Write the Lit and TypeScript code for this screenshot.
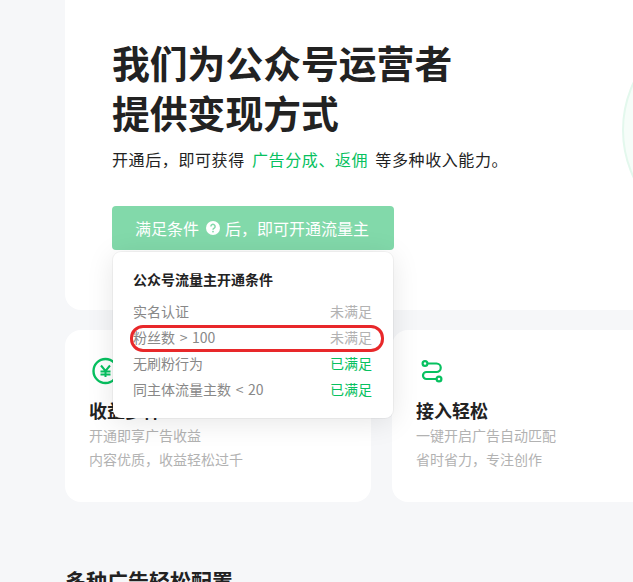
import { LitElement, html, css } from "lit";
import { customElement } from "lit/decorators.js";

const conditions = [
  { label: "实名认证", status: "未满足", ok: false },
  { label: "粉丝数 > 100", status: "未满足", ok: false },
  { label: "无刷粉行为", status: "已满足", ok: true },
  { label: "同主体流量主数 < 20", status: "已满足", ok: true },
];

@customElement("app-root")
export class AppRoot extends LitElement {
  static styles = css`
    :host {
      display: block;
      width: 633px;
      height: 582px;
      overflow: hidden;
      background: #f6f7f9;
      font-family: "Noto Sans CJK SC", "Liberation Sans", sans-serif;
      color: #222;
    }
    .page {
      position: relative;
      height: 582px;
      padding-left: 65px;
      box-sizing: border-box;
      overflow: hidden;
    }
    .hero {
      position: relative;
      box-sizing: border-box;
      width: 640px;
      height: 310px;
      padding: 37px 0 0 47px;
      background: #fff;
      border-radius: 0 0 16px 16px;
      overflow: hidden;
    }
    .hero h1 {
      margin: 0;
      font-size: 37.8px;
      line-height: 50px;
      font-weight: 700;
      color: #222;
    }
    .hero p {
      margin: 10px 0 0;
      font-size: 16px;
      line-height: 24px;
      letter-spacing: 0.6px;
      word-spacing: 3px;
      color: #222;
    }
    .hero p em {
      font-style: normal;
      color: #07c160;
    }
    .circle {
      position: absolute;
      left: 557px;
      top: 18px;
      width: 224px;
      height: 224px;
      border-radius: 50%;
      background: #f6fdf9;
      border: 2px solid #e3f8ed;
      box-sizing: border-box;
    }
    .open {
      display: flex;
      align-items: center;
      box-sizing: border-box;
      width: 282px;
      height: 44px;
      margin-top: 35px;
      padding-left: 23px;
      border-radius: 4px;
      background: #82d9aa;
      color: #fff;
      font-size: 16px;
    }
    .open svg {
      display: block;
      margin: 0 5px 0 7px;
    }
    .cards {
      display: flex;
      gap: 21px;
      margin-top: 20px;
    }
    .card {
      flex: none;
      box-sizing: border-box;
      width: 306px;
      height: 172px;
      padding: 24px 24px 0;
      background: #fff;
      border-radius: 16px;
    }
    .card svg {
      display: block;
      width: 34px;
      height: 34px;
    }
    .card h3 {
      margin: 9px 0 0;
      font-size: 18px;
      line-height: 26px;
      font-weight: 700;
      color: #222;
    }
    .card div {
      font-size: 14px;
      line-height: 24px;
      color: #b2b2b2;
    }
    .more {
      margin: 64px 0 0;
      font-size: 21px;
      line-height: 28px;
      font-weight: 700;
      color: #222;
    }
    .pop {
      position: absolute;
      left: 113px;
      top: 252px;
      box-sizing: border-box;
      width: 280px;
      height: 166px;
      padding: 17px 21px 0 20px;
      background: #fff;
      border-radius: 8px;
      box-shadow: 0 0 0 1px rgba(0, 0, 0, 0.04), 0 4px 28px rgba(0, 0, 0, 0.1);
    }
    .pop h4 {
      margin: 0 0 9px;
      font-size: 14px;
      line-height: 20px;
      font-weight: 700;
      color: #222;
    }
    .row {
      display: flex;
      justify-content: space-between;
      font-size: 14px;
      line-height: 26px;
      word-spacing: 1.5px;
      color: #888;
    }
    .off {
      color: #b2b2b2;
    }
    .on {
      color: #07c160;
    }
    .mark {
      position: absolute;
      left: 130px;
      top: 325px;
      width: 254px;
      height: 27px;
      border: 3px solid #e8282a;
      border-radius: 13px;
      box-sizing: border-box;
    }
  `;

  render() {
    return html`
      <div class="page">
        <section class="hero">
          <div class="circle"></div>
          <h1>我们为公众号运营者<br />提供变现方式</h1>
          <p>开通后，即可获得 <em>广告分成、返佣</em> 等多种收入能力。</p>
          <div class="open">
            <span>满足条件</span>
            <svg width="14" height="14" viewBox="0 0 14 14">
              <circle cx="7" cy="7" r="7" fill="#fff" />
              <path d="M4.9 5.5a2.1 2.1 0 1 1 3.3 1.7c-.8.5-1.2.8-1.2 1.6" fill="none" stroke="#82d9aa" stroke-width="1.5" />
              <circle cx="7" cy="10.6" r="0.9" fill="#82d9aa" />
            </svg>
            <span>后，即可开通流量主</span>
          </div>
        </section>
        <div class="cards">
          <div class="card">
            <svg viewBox="0 0 34 34" fill="none" stroke="#07c160" stroke-width="2.4">
              <circle cx="16.5" cy="17" r="12" />
              <path d="M12 11.5l4.5 5.5 4.500-5.500M11.500 17.500h10M11.500 20.500h10M16.500 17v6" stroke-width="2" />
            </svg>
            <h3>收益多样</h3>
            <div>开通即享广告收益</div>
            <div>内容优质，收益轻松过千</div>
          </div>
          <div class="card">
            <svg viewBox="0 0 34 34" fill="none" stroke="#07c160" stroke-width="2.2">
              <circle cx="9" cy="9.5" r="2.4" />
              <circle cx="23" cy="25" r="2.4" />
              <path d="M11.5 9.5H20.5a4.25 4.25 0 0 1 0 8.5H10.5a3.5 3.5 0 0 0 0 7H20.5" />
            </svg>
            <h3>接入轻松</h3>
            <div>一键开启广告自动匹配</div>
            <div>省时省力，专注创作</div>
          </div>
        </div>
        <h2 class="more">多种广告轻松配置</h2>
        <div class="pop">
          <h4>公众号流量主开通条件</h4>
          ${conditions.map(
            (c) => html`<div class="row">
              <span>${c.label}</span>
              <span class=${c.ok ? "on" : "off"}>${c.status}</span>
            </div>`
          )}
        </div>
        <div class="mark"></div>
      </div>
    `;
  }
}
